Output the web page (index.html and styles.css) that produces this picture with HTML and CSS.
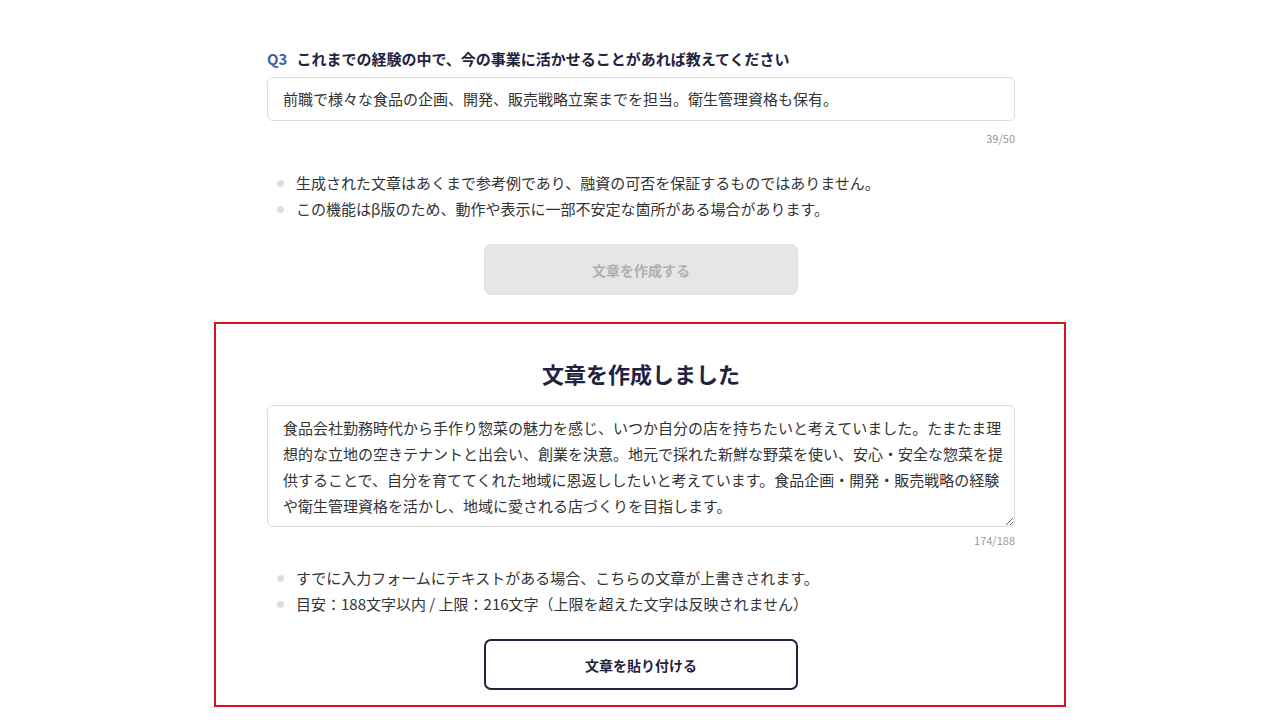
FILE: index.html
```html
<!DOCTYPE html>
<html lang="ja">
<head>
    <meta charset="UTF-8">
    <meta name="viewport" content="width=device-width, initial-scale=1.0">
    <title>文章作成</title>
    <link rel="stylesheet" href="styles.css">
</head>
<body>
    <main class="container">
        <div class="question">
            <p class="question-title"><span class="q-num">Q3</span>これまでの経験の中で、今の事業に活かせることがあれば教えてください</p>
            <div class="text-input">前職で様々な食品の企画、開発、販売戦略立案までを担当。衛生管理資格も保有。</div>
            <div class="counter">39/50</div>
        </div>

        <ul class="notes">
            <li>生成された文章はあくまで参考例であり、融資の可否を保証するものではありません。</li>
            <li>この機能はβ版のため、動作や表示に一部不安定な箇所がある場合があります。</li>
        </ul>

        <div class="btn-row">
            <button type="button" class="btn btn-disabled" disabled>文章を作成する</button>
        </div>

        <section class="result">
            <h2 class="result-title">文章を作成しました</h2>
            <textarea class="result-text">食品会社勤務時代から手作り惣菜の魅力を感じ、いつか自分の店を持ちたいと考えていました。たまたま理想的な立地の空きテナントと出会い、創業を決意。地元で採れた新鮮な野菜を使い、安心・安全な惣菜を提供することで、自分を育ててくれた地域に恩返ししたいと考えています。食品企画・開発・販売戦略の経験や衛生管理資格を活かし、地域に愛される店づくりを目指します。</textarea>
            <div class="counter counter-result">174/188</div>

            <ul class="notes notes-result">
                <li>すでに入力フォームにテキストがある場合、こちらの文章が上書きされます。</li>
                <li>目安：188文字以内 / 上限：216文字（上限を超えた文字は反映されません）</li>
            </ul>

            <div class="btn-row btn-row-result">
                <button type="button" class="btn btn-outline">文章を貼り付ける</button>
            </div>
        </section>
    </main>
</body>
</html>
```

FILE: styles.css
```css
body {
    margin: 0;
    padding: 0;
    background-color: #ffffff;
    color: #333333;
    font-family: "Noto Sans CJK JP", "Noto Sans", sans-serif;
}
.container {
    width: 748px;
    margin: 0 auto;
    padding: 49px 0 0 2px;
}
/* Question */
.question-title {
    margin: 0 0 8px;
    font-size: 15px;
    font-weight: bold;
    line-height: 20px;
    color: #1f2340;
}
.q-num {
    color: #3f5ea8;
    margin-right: 9px;
}
.text-input {
    box-sizing: border-box;
    height: 44px;
    border: 1px solid #dcdcdc;
    border-radius: 6px;
    padding: 0 15px;
    font-size: 15px;
    line-height: 42px;
    color: #333333;
}
.counter {
    margin-top: 9px;
    text-align: right;
    font-size: 11px;
    line-height: 16px;
    color: #999999;
}
/* Notes */
.notes {
    list-style: none;
    margin: 24px 0 0;
    padding: 0;
}
.notes li {
    position: relative;
    padding-left: 29px;
    font-size: 15px;
    line-height: 26px;
    color: #333333;
}
.notes li::before {
    content: "";
    position: absolute;
    left: 10px;
    top: 10px;
    width: 7px;
    height: 7px;
    border-radius: 50%;
    background-color: #dedede;
}
/* Buttons */
.btn-row {
    display: flex;
    justify-content: center;
    margin-top: 22px;
}
.btn {
    box-sizing: border-box;
    width: 314px;
    height: 51px;
    border-radius: 7px;
    font-family: inherit;
    font-size: 14px;
    font-weight: bold;
}
.btn-disabled {
    background-color: #e6e6e4;
    border: 1px solid #e0e0de;
    color: #b0b0b0;
}
.btn-outline {
    background-color: #ffffff;
    border: 2px solid #1f2340;
    color: #1f2340;
    cursor: pointer;
}
/* Result */
.result {
    margin: 27px -51px 0 -53px;
    padding: 33px 49px 15px 51px;
    border: 2px solid #d9141c;
}
.result-title {
    margin: 0 0 16px;
    text-align: center;
    font-size: 22px;
    line-height: 32px;
    font-weight: bold;
    color: #1f2340;
}
.result-text {
    display: block;
    box-sizing: border-box;
    width: 100%;
    height: 122px;
    margin: 0;
    padding: 9px 10px 7px 15px;
    border: 1px solid #dcdcdc;
    border-radius: 6px;
    font-family: inherit;
    font-size: 15px;
    line-height: 26px;
    color: #333333;
    overflow: hidden;
    resize: vertical;
}
.counter-result {
    margin-top: 5px;
}
.notes-result {
    margin-top: 17px;
}
```
